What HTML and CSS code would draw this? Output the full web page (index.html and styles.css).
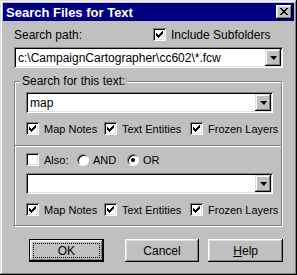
FILE: index.html
```html
<!DOCTYPE html>
<html lang="en">
  <head>
    <meta charset="UTF-8" />
    <title>Search Files for Text</title>
    <link rel="stylesheet" href="styles.css">
  </head>
  <body>
    <div class="window">
      <div class="titlebar">
        <span class="title">Search Files for Text</span>
        <span class="close">
          <svg width="8" height="7" viewBox="0 0 8 7" shape-rendering="crispEdges">
            <path d="M0 0h2v1h-2zM6 0h2v1h-2zM1 1h2v1h-2zM5 1h2v1h-2zM2 2h4v1h-4zM3 3h2v1h-2zM2 4h4v1h-4zM1 5h2v1h-2zM5 5h2v1h-2zM0 6h2v1h-2zM6 6h2v1h-2z" fill="#000"/>
          </svg>
        </span>
      </div>

      <div class="content">
        <div class="path-row">
          <span class="label">Search path:</span>
          <label class="check include">
            <span class="box checked"></span>Include Subfolders
          </label>
        </div>

        <div class="combo">
          <span class="value">c:\CampaignCartographer\cc602\*.fcw</span>
          <span class="drop"><span class="arrow"></span></span>
        </div>

        <div class="group">
          <div class="group-label">Search for this text:</div>

          <div class="section first">
            <div class="combo">
              <span class="value">map</span>
              <span class="drop"><span class="arrow"></span></span>
            </div>
            <div class="check-row">
              <label class="check"><span class="box checked"></span>Map Notes</label>
              <label class="check"><span class="box checked"></span>Text Entities</label>
              <label class="check"><span class="box checked"></span>Frozen Layers</label>
            </div>
          </div>

          <div class="section second">
            <div class="also-row">
              <label class="check"><span class="box"></span>Also:</label>
              <label class="radio"><span class="dot"></span>AND</label>
              <label class="radio"><span class="dot on"></span>OR</label>
            </div>
            <div class="combo">
              <span class="value"></span>
              <span class="drop"><span class="arrow"></span></span>
            </div>
            <div class="check-row">
              <label class="check"><span class="box checked"></span>Map Notes</label>
              <label class="check"><span class="box checked"></span>Text Entities</label>
              <label class="check"><span class="box checked"></span>Frozen Layers</label>
            </div>
          </div>
        </div>

        <div class="buttons">
          <span class="btn default"><span class="focus">OK</span></span>
          <span class="btn cancel">Cancel</span>
          <span class="btn help"><u>H</u>elp</span>
        </div>
      </div>
    </div>
  </body>
</html>
```

FILE: styles.css
```css
* {
  box-sizing: border-box;
}
body {
  margin: 0;
  font-family: "Liberation Sans", Arial, sans-serif;
  font-size: 11px;
  color: #000;
  background: #c0c0c0;
}
.window {
  width: 297px;
  height: 275px;
  padding: 3px;
  background: #c0c0c0;
  box-shadow: inset -1px -1px #000, inset 1px 1px #dfdfdf, inset -2px -2px #808080, inset 2px 2px #fff;
}
.titlebar {
  height: 18px;
  background: #000080;
  display: flex;
  align-items: center;
  justify-content: space-between;
  padding: 0 2px 0 3px;
}
.title {
  color: #fff;
  font-weight: bold;
  font-size: 13px;
}
.close {
  width: 16px;
  height: 14px;
  background: #c0c0c0;
  display: flex;
  align-items: center;
  justify-content: center;
  box-shadow: inset -1px -1px #000, inset 1px 1px #fff, inset -2px -2px #808080, inset 2px 2px #dfdfdf;
}
.close svg {
  margin: -1px 0 0 -1px;
}
.content {
  padding: 7px 11px 0 11px;
}
.path-row {
  display: flex;
  align-items: center;
  height: 13px;
  font-size: 12px;
}
.path-row .label {
  width: 139px;
}
.check,
.radio {
  display: flex;
  align-items: center;
  white-space: nowrap;
}
.box {
  width: 13px;
  height: 13px;
  margin-right: 5px;
  flex: none;
  background: #fff;
  box-shadow: inset 1px 1px #808080, inset -1px -1px #fff, inset 2px 2px #000, inset -2px -2px #dfdfdf;
}
.box.checked {
  background: #fff url("data:image/svg+xml,%3Csvg xmlns='http://www.w3.org/2000/svg' width='13' height='13' shape-rendering='crispEdges'%3E%3Cpath d='M3 5h1v3h-1zM4 6h1v3h-1zM5 7h1v3h-1zM6 6h1v3h-1zM7 5h1v3h-1zM8 4h1v3h-1zM9 3h1v3h-1z' fill='%23000'/%3E%3C/svg%3E") no-repeat;
}
.combo {
  height: 21px;
  margin-top: 6px;
  background: #fff;
  display: flex;
  align-items: center;
  padding: 2px;
  font-size: 12px;
  box-shadow: inset 1px 1px #808080, inset -1px -1px #fff, inset 2px 2px #000, inset -2px -2px #dfdfdf;
}
.combo .value {
  flex: 1;
  padding-left: 2px;
}
.drop {
  width: 16px;
  height: 17px;
  background: #c0c0c0;
  display: flex;
  align-items: center;
  justify-content: center;
  box-shadow: inset -1px -1px #000, inset 1px 1px #dfdfdf, inset -2px -2px #808080, inset 2px 2px #fff;
}
.arrow {
  width: 0;
  height: 0;
  border-left: 4px solid transparent;
  border-right: 3px solid transparent;
  border-top: 4px solid #000;
  margin: 1px 0 0 0;
}
.group {
  margin-top: 13px;
  width: 268px;
  border: 1px solid #808080;
  box-shadow: 1px 1px 0 #fff, inset 1px 1px 0 #fff;
}
.group-label {
  width: fit-content;
  margin: -8px 0 0 5px;
  padding: 0 2px;
  background: #c0c0c0;
  line-height: 14px;
  font-size: 12px;
}
.section {
  padding: 0 8px 0 11px;
}
.section.first {
  padding-top: 4px;
  padding-bottom: 10px;
}
.section.first .combo {
  margin-top: 0;
}
.section.second {
  border-top: 1px solid #808080;
  box-shadow: inset 0 1px 0 #fff;
  padding-top: 7px;
  padding-bottom: 9px;
}
.check-row {
  display: grid;
  grid-template-columns: 78px 86px 1fr;
  height: 13px;
  margin-top: 9px;
}
.section .combo {
  margin-top: 7px;
}
.also-row {
  display: grid;
  grid-template-columns: 51px 50px 1fr;
  height: 13px;
}
.dot {
  width: 12px;
  height: 12px;
  margin-right: 4px;
  border-radius: 50%;
  background: #fff;
  border: 1px solid;
  border-color: #808080 #fff #fff #808080;
  box-shadow: inset 1px 1px 0 #000;
  position: relative;
}
.dot.on::after {
  content: "";
  position: absolute;
  left: 3px;
  top: 3px;
  width: 4px;
  height: 4px;
  border-radius: 50%;
  background: #000;
}
.buttons {
  display: flex;
  margin-top: 13px;
  padding-left: 15px;
  font-size: 12px;
}
.btn {
  width: 75px;
  height: 23px;
  display: flex;
  align-items: center;
  justify-content: center;
  box-shadow: inset -1px -1px #000, inset 1px 1px #fff, inset -2px -2px #808080, inset 2px 2px #dfdfdf;
}
.btn.default {
  border: 1px solid #000;
  padding: 3px;
}
.focus {
  flex: 1;
  align-self: stretch;
  display: flex;
  align-items: center;
  justify-content: center;
  border: 1px dotted #000;
}
.btn.cancel {
  margin-left: 21px;
}
.btn.help {
  margin-left: 9px;
}
```
